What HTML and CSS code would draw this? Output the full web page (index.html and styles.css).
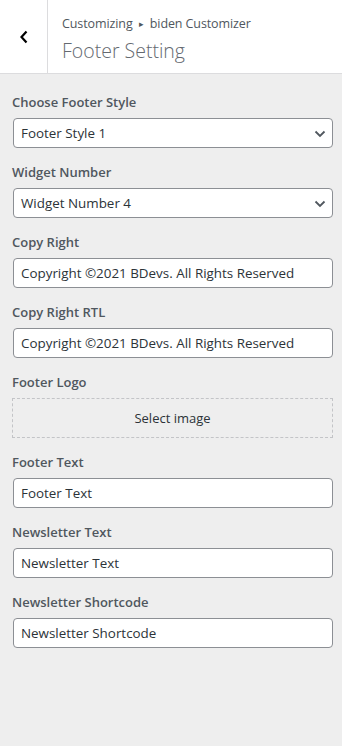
FILE: index.html
```html
<!DOCTYPE html>
<html lang="en">
<head>
    <meta charset="UTF-8">
    <meta name="viewport" content="width=device-width, initial-scale=1.0">
    <title>Footer Setting - Customizer</title>
    <link rel="stylesheet" href="styles.css">
</head>
<body>
    <div class="panel-header">
        <button class="back-btn" aria-label="Back">
            <svg width="10" height="14" viewBox="0 0 10 14">
                <path d="M7.5 1.5 L2.5 7 L7.5 12.5" fill="none" stroke="#000" stroke-width="2.2"/>
            </svg>
        </button>
        <div class="panel-title">
            <div class="crumb">Customizing <span class="arrow">&#9656;</span> biden Customizer</div>
            <h1>Footer Setting</h1>
        </div>
    </div>

    <div class="controls">
        <div class="control">
            <label>Choose Footer Style</label>
            <div class="select">Footer Style 1
                <svg class="caret" width="12" height="8" viewBox="0 0 12 8"><path d="M1.5 1.5 L6 6 L10.5 1.5" fill="none" stroke="#50575e" stroke-width="1.8"/></svg>
            </div>
        </div>
        <div class="control">
            <label>Widget Number</label>
            <div class="select">Widget Number 4
                <svg class="caret" width="12" height="8" viewBox="0 0 12 8"><path d="M1.5 1.5 L6 6 L10.5 1.5" fill="none" stroke="#50575e" stroke-width="1.8"/></svg>
            </div>
        </div>
        <div class="control">
            <label>Copy Right</label>
            <div class="input">Copyright ©2021 BDevs. All Rights Reserved</div>
        </div>
        <div class="control">
            <label>Copy Right RTL</label>
            <div class="input">Copyright ©2021 BDevs. All Rights Reserved</div>
        </div>
        <div class="control">
            <label>Footer Logo</label>
            <div class="upload">Select image</div>
        </div>
        <div class="control">
            <label>Footer Text</label>
            <div class="input">Footer Text</div>
        </div>
        <div class="control">
            <label>Newsletter Text</label>
            <div class="input">Newsletter Text</div>
        </div>
        <div class="control">
            <label>Newsletter Shortcode</label>
            <div class="input">Newsletter Shortcode</div>
        </div>
    </div>
</body>
</html>
```

FILE: styles.css
```css
body {
    margin: 0;
    background: #eeeeee;
    font-family: "Open Sans", "Noto Sans", sans-serif;
    color: #2c3338;
    min-height: 746px;
}
.panel-header {
    display: flex;
    height: 73px;
    background: #fff;
    border-bottom: 1px solid #dcdcde;
}
.back-btn {
    width: 48px;
    border: none;
    border-right: 1px solid #dcdcde;
    background: #fff;
    padding: 0;
    display: flex;
    align-items: center;
    justify-content: center;
}
.panel-title {
    padding: 15px 0 0 14px;
    color: #50575e;
}
.crumb {
    font-size: 12.5px;
    line-height: 18px;
    letter-spacing: -0.1px;
}
.arrow {
    font-size: 9px;
    vertical-align: 1px;
    margin: 0 3px;
}
h1 {
    margin: 5px 0 0;
    font-size: 19.5px;
    font-weight: 300;
    line-height: 26px;
    color: #646970;
}
.controls {
    padding: 19px 9px 0 12px;
}
.control {
    margin-bottom: 15px;
}
label {
    display: block;
    font-size: 13px;
    font-weight: 600;
    color: #50575e;
    line-height: 18px;
    margin-bottom: 7px;
}
.select, .input {
    box-sizing: border-box;
    height: 30px;
    margin-left: 1px;
    border: 1px solid #8c8f94;
    border-radius: 4px;
    background: #fff;
    font-size: 13.4px;
    line-height: 28px;
    padding: 0 7px;
    color: #2c3338;
    position: relative;
}
.caret {
    position: absolute;
    right: 6px;
    top: 11px;
}
.upload {
    box-sizing: border-box;
    height: 40px;
    border: 1px dashed #c3c4c7;
    font-size: 13px;
    line-height: 38px;
    text-align: center;
    color: #2c3338;
}
```
